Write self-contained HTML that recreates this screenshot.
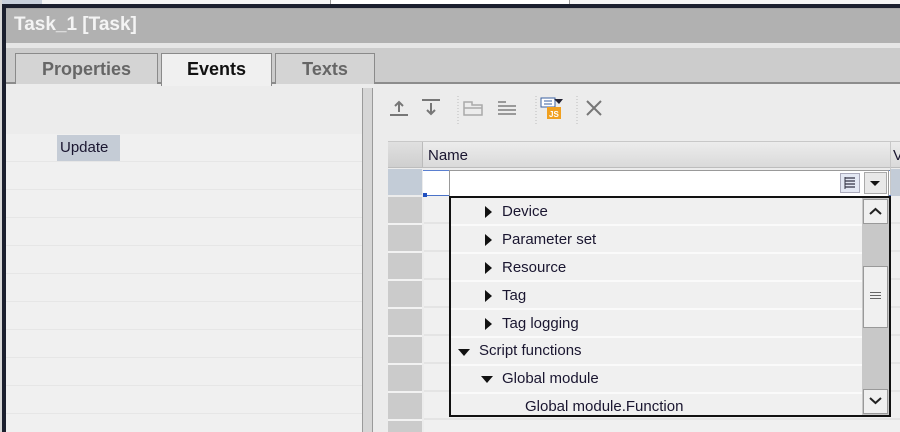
<!DOCTYPE html>
<html><head><style>
*{margin:0;padding:0;box-sizing:border-box}
body{width:900px;height:432px;overflow:hidden;background:#ececec;font-family:"Liberation Sans","DejaVu Sans",sans-serif;position:relative}
.a{position:absolute}
.t{font-size:15px;color:#1a1630;white-space:nowrap}
.tri{position:absolute;width:0;height:0}
</style></head><body>
<div class="a" style="left:0;top:0;width:900px;height:5px;background:#f4f4f4"></div>
<div class="a" style="left:0;top:0;width:42px;height:4px;background:#c8d0dc"></div>
<div class="a" style="left:330px;top:0;width:240px;height:4px;background:#fff;border-left:1px solid #999;border-right:1px solid #999"></div>
<div class="a" style="left:0;top:4px;width:900px;height:4px;background:#1b1f2e"></div>
<div class="a" style="left:0;top:4px;width:6px;height:428px;background:#1b1f2e"></div>
<div class="a" style="left:0;top:0;width:2px;height:432px;background:#d8d8d8"></div>
<div class="a" style="left:6px;top:8px;width:894px;height:35px;background:#b1b1b1;border-top:1px solid #a5a5a5"></div>
<div class="a" style="left:14px;top:14px;font-size:19px;font-weight:bold;color:#f4f4f4">Task_1 [Task]</div>
<div class="a" style="left:6px;top:43px;width:894px;height:5px;background:#e6e6e6"></div>
<div class="a" style="left:6px;top:48px;width:894px;height:36px;background:#cccccc;border-bottom:2px solid #8c8c8c"></div>
<div class="a" style="left:15px;top:53px;width:143px;height:31px;background:#d4d4d4;border:1px solid #8a8a8a;border-bottom:none;font-size:18px;font-weight:bold;color:#666;text-align:center;line-height:30px">Properties</div>
<div class="a" style="left:161px;top:53px;width:111px;height:33px;background:#f0f0f0;border:1px solid #8a8a8a;border-bottom:none;font-size:18px;font-weight:bold;color:#111;text-align:center;line-height:30px">Events</div>
<div class="a" style="left:275px;top:53px;width:100px;height:31px;background:#d4d4d4;border:1px solid #8a8a8a;border-bottom:none;font-size:18px;font-weight:bold;color:#666;text-align:center;line-height:30px">Texts</div>
<!-- left panel -->
<div class="a" style="left:6px;top:86px;width:356px;height:346px;background:#f0f0f0"></div>
<div class="a" style="left:6px;top:86px;width:356px;height:48px;background:#ececec"></div>
<div class="a" style="left:6px;top:134px;width:356px;height:298px;background:repeating-linear-gradient(#f0f0f0 0 27px,#e6e6e6 27px 28px)"></div>
<div class="a" style="left:57px;top:135px;width:63px;height:26px;background:#c5ccd6"></div>
<div class="a t" style="left:60px;top:139px">Update</div>
<!-- splitter -->
<div class="a" style="left:362px;top:88px;width:11px;height:344px;background:#d6d6d6;border-left:1px solid #9a9a9a;border-right:1px solid #9a9a9a"></div>
<!-- toolbar -->
<svg class="a" style="left:386px;top:94px" width="230" height="30">
<g stroke="#777" stroke-width="2" fill="none">
<path d="M4 21h18M13 18V8M9 12l4-4 4 4"/>
<path d="M36 6h18M45 9v11M41 16l4 4 4-4"/>
<path d="M78 8h8v3h10v10H78z" stroke="#aaa" stroke-width="1.5"/>
<path d="M78 14h18" stroke="#aaa" stroke-width="1.5"/>
<path d="M112 8h8M112 12h18M112 16h18M112 20h18" stroke="#999" stroke-width="2"/>
<path d="M201 7l14 14M215 7l-14 14" stroke="#777"/>
</g>
<path d="M72 2v30M150 2v30M191 2v30" stroke="#bbb" stroke-dasharray="1 2"/>
<rect x="155" y="4" width="14" height="9" fill="#fff" stroke="#3a5fa0"/>
<path d="M158 7h8M158 10h8" stroke="#3a5fa0"/>
<rect x="161" y="13" width="14" height="12" fill="#f0a020"/>
<text x="163" y="23" font-size="8" fill="#fff" font-family="Liberation Sans" font-weight="bold">JS</text>
<path d="M168 5l5 5 4-5z" fill="#223"/>
</svg>
<!-- table -->
<div class="a" style="left:388px;top:141px;width:512px;height:27px;background:linear-gradient(#ececec,#dadada);border-top:1px solid #c8c8c8;border-bottom:1px solid #bdbdbd"></div>
<div class="a" style="left:388px;top:142px;width:34px;height:25px;background:linear-gradient(#e0e0e0,#cfcfcf)"></div>
<div class="a" style="left:422px;top:142px;width:1px;height:25px;background:#bbb"></div>
<div class="a" style="left:890px;top:142px;width:1px;height:290px;background:#c8c8c8"></div>
<div class="a t" style="left:428px;top:147px">Name</div>
<div class="a t" style="left:893px;top:147px">V</div>
<div class="a" style="left:388px;top:169px;width:34px;height:26px;background:#c3ccd7"></div>
<div class="a" style="left:388px;top:197px;width:34px;height:235px;background:repeating-linear-gradient(#cbcbcb 0 26px,#f2f2f2 26px 28px)"></div>
<div class="a" style="left:424px;top:196px;width:476px;height:236px;background:repeating-linear-gradient(#f0f0f0 0 26px,#e4e4e4 26px 28px)"></div>
<div class="a" style="left:423px;top:170px;width:467px;height:26px;background:#fff;border-top:1px solid #5a7fd0"></div>
<div class="a" style="left:425px;top:195px;width:475px;height:1px;background:#4a72c8"></div>
<div class="a" style="left:423px;top:193px;width:4px;height:4px;background:#2050c0"></div>
<div class="a" style="left:891px;top:169px;width:9px;height:27px;background:#c3ccd7"></div>
<!-- combo -->
<div class="a" style="left:449px;top:170px;width:440px;height:27px;background:#fff;border:1px solid #999"></div>
<div class="a" style="left:840px;top:173px;width:20px;height:20px;background:#e4e8f4;border:1px solid #aab"></div>
<svg class="a" style="left:844px;top:176px" width="12" height="14"><path d="M1 2h10M1 5h10M1 8h10M1 11h10" stroke="#334" stroke-width="1.2"/><path d="M1 1v12" stroke="#334"/></svg>
<div class="a" style="left:864px;top:172px;width:23px;height:22px;background:#e8e8e8;border:1px solid #aaa"></div>
<div class="tri" style="left:870px;top:181px;border-left:5px solid transparent;border-right:5px solid transparent;border-top:5px solid #111"></div>
<!-- dropdown -->
<div class="a" style="left:449px;top:196px;width:442px;height:221px;background:#f0f0f0;border:2px solid #111"></div>
<div class="a" style="left:451px;top:198px;width:411px;height:217px;background:repeating-linear-gradient(#f0f0f0 0 26px,#fafafa 26px 28px)"></div>
<div class="a" style="left:862px;top:198px;width:27px;height:217px;background:#c8c8c8"></div>
<div class="a" style="left:863px;top:199px;width:25px;height:25px;background:#f0f0f0;border:1px solid #999"></div>
<svg class="a" style="left:868px;top:206px" width="15" height="10"><path d="M2 8l5.5-5 5.5 5" stroke="#222" stroke-width="2" fill="none"/></svg>
<div class="a" style="left:863px;top:266px;width:25px;height:62px;background:#f0f0f0;border:1px solid #999"></div>
<svg class="a" style="left:869px;top:291px" width="13" height="10"><path d="M1 1.5h11M1 4.5h11M1 7.5h11" stroke="#666"/></svg>
<div class="a" style="left:863px;top:389px;width:25px;height:25px;background:#f0f0f0;border:1px solid #999"></div>
<svg class="a" style="left:868px;top:396px" width="15" height="10"><path d="M2 2l5.5 5 5.5-5" stroke="#222" stroke-width="2" fill="none"/></svg>
<!-- items -->
<div class="tri" style="left:485px;top:206px;border-top:6px solid transparent;border-bottom:6px solid transparent;border-left:7px solid #111"></div>
<div class="a t" style="left:502px;top:203px">Device</div>
<div class="tri" style="left:485px;top:234px;border-top:6px solid transparent;border-bottom:6px solid transparent;border-left:7px solid #111"></div>
<div class="a t" style="left:502px;top:231px">Parameter set</div>
<div class="tri" style="left:485px;top:262px;border-top:6px solid transparent;border-bottom:6px solid transparent;border-left:7px solid #111"></div>
<div class="a t" style="left:502px;top:259px">Resource</div>
<div class="tri" style="left:485px;top:290px;border-top:6px solid transparent;border-bottom:6px solid transparent;border-left:7px solid #111"></div>
<div class="a t" style="left:502px;top:287px">Tag</div>
<div class="tri" style="left:485px;top:318px;border-top:6px solid transparent;border-bottom:6px solid transparent;border-left:7px solid #111"></div>
<div class="a t" style="left:502px;top:315px">Tag logging</div>
<div class="tri" style="left:458px;top:349px;border-left:6px solid transparent;border-right:6px solid transparent;border-top:7px solid #111"></div>
<div class="a t" style="left:479px;top:342px">Script functions</div>
<div class="tri" style="left:481px;top:376px;border-left:6px solid transparent;border-right:6px solid transparent;border-top:7px solid #111"></div>
<div class="a t" style="left:502px;top:370px">Global module</div>
<div class="a t" style="left:525px;top:398px">Global module.Function</div>
</body></html>
